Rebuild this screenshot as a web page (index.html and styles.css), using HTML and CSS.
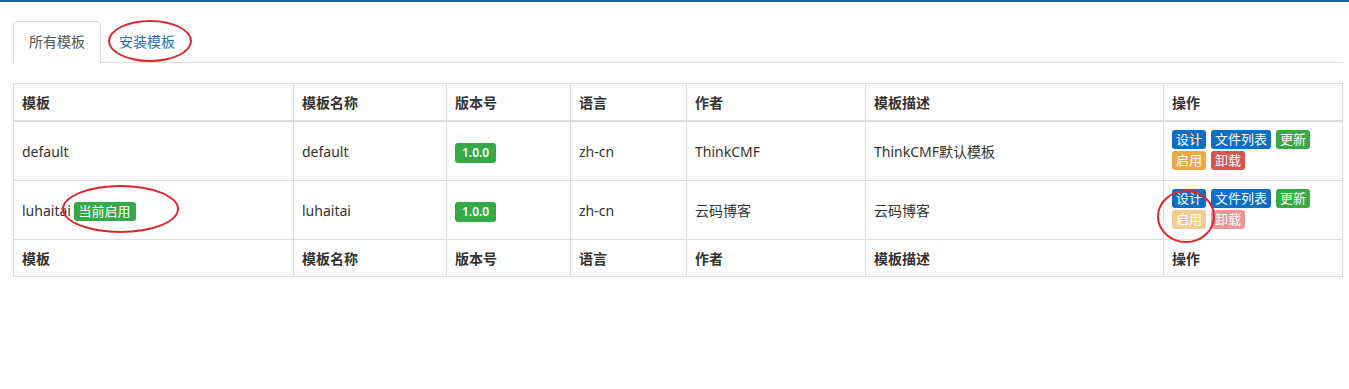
FILE: index.html
```html
<!DOCTYPE html>
<html lang="zh-CN">
<head>
<meta charset="utf-8">
<title>模板管理</title>
<link rel="stylesheet" href="styles.css">
</head>
<body>
<div class="topline"></div>
<div class="wrap">
  <ul class="tabs">
    <li class="tab active"><span>所有模板</span></li>
    <li class="tab"><a href="#">安装模板</a></li>
  </ul>
  <table class="grid">
    <colgroup>
      <col style="width:280px"><col style="width:153px"><col style="width:124px"><col style="width:116px"><col style="width:179px"><col style="width:298px"><col>
    </colgroup>
    <thead>
      <tr><th>模板</th><th>模板名称</th><th>版本号</th><th>语言</th><th>作者</th><th>模板描述</th><th>操作</th></tr>
    </thead>
    <tbody>
      <tr>
        <td>default</td>
        <td>default</td>
        <td><span class="label green">1.0.0</span></td>
        <td>zh-cn</td>
        <td>ThinkCMF</td>
        <td>ThinkCMF默认模板</td>
        <td class="ops">
          <div class="line"><a class="btn blue">设计</a><a class="btn blue">文件列表</a><a class="btn green">更新</a></div>
          <div class="line"><a class="btn orange">启用</a><a class="btn red">卸载</a></div>
        </td>
      </tr>
      <tr>
        <td>luhaitai <span class="label green cur">当前启用</span></td>
        <td>luhaitai</td>
        <td><span class="label green">1.0.0</span></td>
        <td>zh-cn</td>
        <td>云码博客</td>
        <td>云码博客</td>
        <td class="ops">
          <div class="line"><a class="btn blue">设计</a><a class="btn blue">文件列表</a><a class="btn green">更新</a></div>
          <div class="line"><a class="btn orange off">启用</a><a class="btn red off">卸载</a></div>
        </td>
      </tr>
    </tbody>
    <tfoot>
      <tr><th>模板</th><th>模板名称</th><th>版本号</th><th>语言</th><th>作者</th><th>模板描述</th><th>操作</th></tr>
    </tfoot>
  </table>
</div>
<div class="mark m1"></div>
<div class="mark m2"></div>
<div class="mark m3"></div>
</body>
</html>
```
FILE: styles.css
```css
html, body {
  margin: 0;
  padding: 0;
  background: #fff;
}
body {
  font-family: "Noto Sans", "Noto Sans CJK SC", sans-serif;
  font-size: 14px;
  line-height: 20px;
  color: #333;
  position: relative;
  height: 389px;
  overflow: hidden;
}
.topline {
  height: 2px;
  background: #1d5f8f;
}
.wrap {
  margin: 19px 6px 0 13px;
}
.tabs {
  list-style: none;
  margin: 0;
  padding: 0;
  display: flex;
  border-bottom: 1px solid #ddd;
}
.tab {
  margin-bottom: -1px;
  margin-right: 2px;
}
.tab span, .tab a {
  display: block;
  padding: 10px 15px;
  line-height: 20px;
  border: 1px solid transparent;
  border-radius: 4px 4px 0 0;
}
.tab.active span {
  border-color: #ddd;
  border-bottom-color: #fff;
  background: #fff;
  color: #555;
}
.tab a {
  color: #2a6fb0;
  text-decoration: none;
}
.grid {
  margin-top: 20px;
  width: 1330px;
  border-collapse: collapse;
  table-layout: fixed;
  border: 1px solid #ddd;
}
.grid th, .grid td {
  border: 1px solid #ddd;
  padding: 8px;
  text-align: left;
  vertical-align: middle;
}
.grid th {
  font-weight: bold;
  color: #333;
}
.grid thead th {
  border-bottom: 2px solid #ddd;
  padding-top: 9px;
  padding-bottom: 7px;
}
.grid tbody td {
  padding-top: 9px;
  padding-bottom: 7px;
  height: 42px;
}
.grid tbody td.ops {
  padding-top: 8px;
  padding-bottom: 8px;
}
.grid tfoot th {
  padding-top: 9px;
  padding-bottom: 7px;
}
.line {
  height: 21px;
  display: flex;
  align-items: flex-start;
  gap: 5px;
}
.btn {
  display: inline-block;
  font-size: 13px;
  line-height: 19px;
  height: 19px;
  padding: 0 4px;
  border-radius: 3px;
  color: #fff;
  text-decoration: none;
}
.blue { background: #0e6fc2; }
.green { background: #36a947; }
.orange { background: #eaa94a; }
.red { background: #d9534f; }
.off { opacity: 0.6; }
.label {
  display: inline-block;
  font-size: 12px;
  line-height: 20px;
  height: 20px;
  padding: 0 7px;
  border-radius: 3px;
  color: #fff;
  vertical-align: middle;
  font-weight: 600;
}
.label.cur {
  font-weight: normal;
  font-size: 13px;
  padding: 0 5px;
  height: 19px;
  line-height: 19px;
  margin-left: -1px;
}
.mark {
  position: absolute;
  border: 2px solid #e0262b;
  border-radius: 50%;
  box-sizing: border-box;
}
.m1 { left: 108px; top: 20px; width: 84px; height: 42px; }
.m2 { left: 62px; top: 185px; width: 117px; height: 48px; }
.m3 { left: 1157px; top: 190px; width: 58px; height: 53px; }
```
